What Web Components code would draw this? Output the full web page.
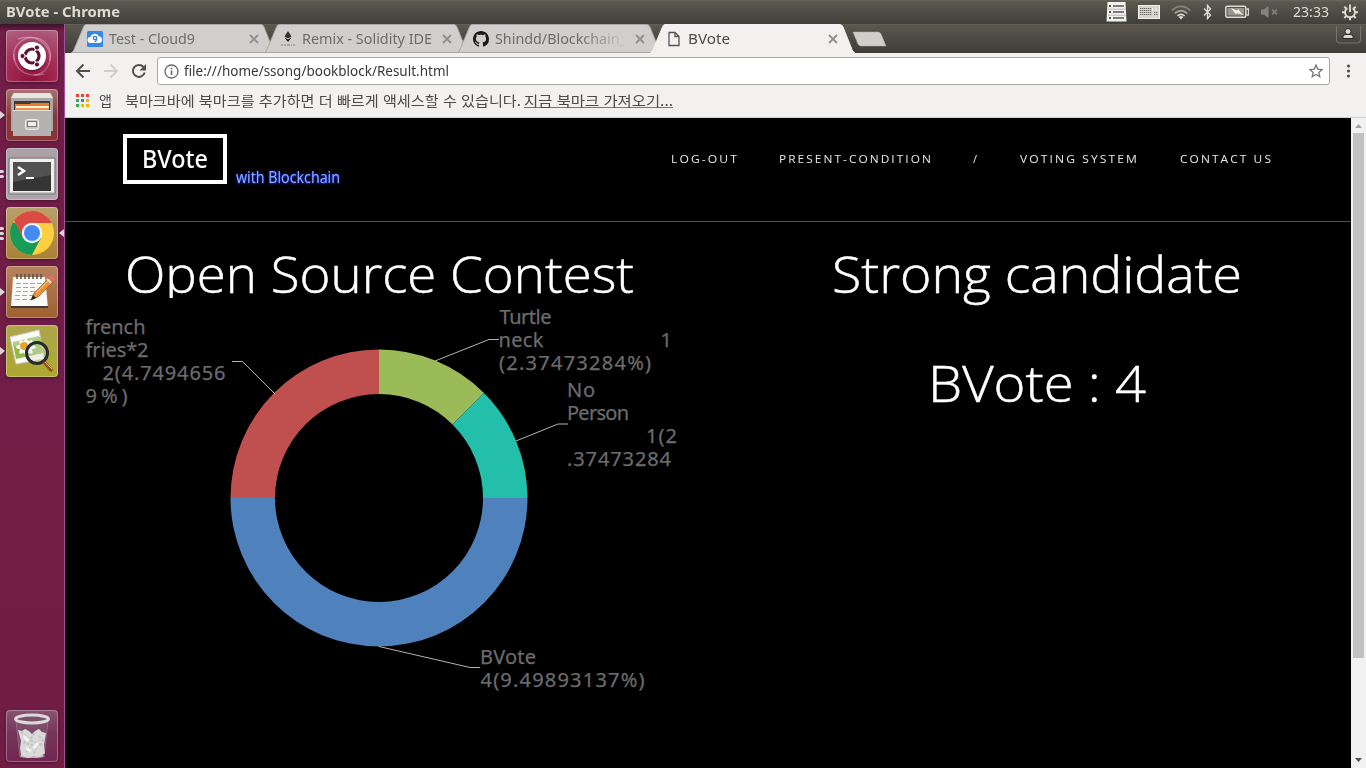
<!DOCTYPE html>
<html lang="ko">
<head>
<meta charset="utf-8">
<title>BVote</title>
<style>
html,body{margin:0;width:1366px;height:768px;overflow:hidden;background:#000;font-family:"Noto Sans","Noto Sans CJK KR",sans-serif}
</style>
</head>
<body>
<desktop-shell></desktop-shell>
<script>
const define = (name, html, setup) => customElements.define(name, class extends HTMLElement {
  connectedCallback() {
    if (this.shadowRoot) return;
    const t = document.createElement('template');
    t.innerHTML = html;
    this.attachShadow({mode: 'open'}).append(t.content.cloneNode(true));
    if (setup) setup.call(this, this.shadowRoot);
  }
});

/* One line of text stretched horizontally to the width in its w attribute. */
define('fit-line', `<style>
:host{display:block;white-space:pre;flex:none}
span{display:inline-block;transform-origin:0 50%}
</style><span><slot></slot></span>`, function (root) {
  const w = +this.getAttribute('w'), s = root.querySelector('span');
  this.style.width = w + 'px';
  const n = s.offsetWidth;
  if (n) s.style.transform = 'scaleX(' + w / s.getBoundingClientRect().width + ')';
});

define('top-panel', `<style>
:host{display:flex;align-items:center;height:24px;box-sizing:border-box;padding:0 8px 0 6px;background:linear-gradient(#68675a 0,#5a584e 2px,#403f3a 100%);color:#dfdbd2;font:13.5px/24px "Noto Sans",sans-serif}
.t{font-weight:700;margin-right:auto}
svg{flex:none;display:block}
</style>
<fit-line class="t" w="114">BVote - Chrome</fit-line>
<svg width="22" height="20" viewBox="0 0 22 20"><path d="M1.5 0h18l1 19.5H.5z" fill="#f1f1ee"/><path d="M2 7.2h18M2 13.2h18" stroke="#b9bbb8"/><path d="M7 4h11M7 10h11M7 16h11" stroke="#555" stroke-width="1.6"/><path d="M3 4h2M3 10h2M3 16h2" stroke="#555" stroke-width="2"/></svg>
<svg style="margin-left:10px" width="22" height="14" viewBox="0 0 22 14"><rect x=".5" y=".5" width="21" height="13" fill="#d6d4cf" stroke="#efeeea"/><path d="M2 3.5h12M2 5.5h12M2 7.5h12M2 9.5h12M16 7.5h4M16 9.5h4" stroke="#68675f" stroke-dasharray="1.3 .7"/><path d="M14.5 3v3M18 3v3" stroke="#eee"/></svg>
<svg style="margin-left:11px" width="20" height="16" viewBox="0 0 20 16"><g fill="none" stroke-width="1.7"><path d="M.7 6.5Q10-1.8 19.3 6.5" stroke="#85837a"/><path d="M3.8 9.4Q10 3.8 16.2 9.4" stroke="#aaa79d"/><path d="M6.4 12Q10 8.6 13.6 12" stroke="#dfdbd2"/></g><path d="M7.6 13Q10 11 12.4 13L10 15.5z" fill="#dfdbd2"/></svg>
<svg style="margin-left:12px" width="9" height="16" viewBox="0 0 9 16"><path d="M1 4.5l6.5 6.500L4.500 14.500V1.500L7.500 5L1 11.500" fill="none" stroke="#dfdbd2" stroke-width="1.4"/></svg>
<svg style="margin-left:13px" width="24" height="14" viewBox="0 0 24 14"><rect x=".8" y="1.300" width="20" height="11" rx="1.500" fill="none" stroke="#dfdbd2" stroke-width="1.500"/><rect x="2.500" y="3" width="16.600" height="7.600" fill="#97958c"/><path d="M21.500 4h2v6h-2" fill="none" stroke="#dfdbd2" stroke-width="1.300"/><path d="M6 3l6 2.500 1-1.500 5 6-6-2-1 1.500z" fill="#f1ede5"/></svg>
<svg style="margin-left:12px" width="18" height="14" viewBox="0 0 18 14"><path d="M0 4.500h3L7.500 1v12L3 9.500H0z" fill="#85837a"/><path d="M11 4.500l5 5m0-5l-5 5" stroke="#85837a" stroke-width="1.700"/></svg>
<fit-line style="margin-left:14px" w="36">23:33</fit-line>
<svg style="margin-left:13px" width="16" height="18" viewBox="0 0 16 18"><g fill="none" stroke="#dfdbd2"><path d="M5.300 5.100A5 5 0 1 0 10.700 5.100" stroke-width="1.900"/><path d="M8 1.500v7.500" stroke-width="1.900"/><path d="M0 9.300h3M13 9.300h3M8 14v3.300M2.300 3.600l2.100 2.100M13.700 3.600l-2.100 2.100M2.300 15l2.100-2.100M13.700 15l-2.100-2.100" stroke-width="2"/></g></svg>`);

/* Launcher tile; the "windows" attribute gives the number of running-window markers. */
define('launch-tile', `<style>
:host{display:grid;grid-template-columns:6px 52px 1fr;height:52px;align-items:center}
.box{width:52px;height:52px;box-sizing:border-box;border-radius:4px;background:var(--c);box-shadow:inset 0 0 0 1px #ffffff4a,0 1px 3px #0005;overflow:hidden}
::slotted(svg){display:block;width:52px;height:52px}
i{display:grid;gap:2px}i b{width:4px;height:3px;background:#d9d4d8;border-radius:0 2px 2px 0}
.tri{width:0;height:0;border:4px solid transparent;border-left:5px solid #d9d4d8;border-right:0}
.r{width:0;height:0;justify-self:end;border:4px solid transparent;border-right:5px solid #d9d4d8;border-left:0}
</style><i></i><div class="box"><slot></slot></div>`, function (root) {
  const n = +this.getAttribute('windows') || 0, m = root.querySelector('i');
  if (n === 1) m.innerHTML = '<span class="tri"></span>';
  else m.innerHTML = '<b></b>'.repeat(n);
  if (this.hasAttribute('active')) root.append(Object.assign(document.createElement('span'), {className: 'r'}));
});

define('unity-launcher', `<style>
:host{display:flex;flex-direction:column;gap:7px;box-sizing:border-box;width:65px;height:744px;padding:6px 0;border-right:1px solid #a3519a;background:linear-gradient(#3c1128 0,#701d48 7px,#701d46 100%)}
.last{margin-top:auto}
</style>
<launch-tile style="--c:radial-gradient(circle at 50% 100%,#8c1238,#a52c57 50%,#ae6683)"><svg viewBox="0 0 52 52"><g fill="none" stroke="#ffffff48" stroke-width="1.500"><path d="M8 30C5 14 20 4 34 9c8 4 12 12 10 22"/><path d="M12 9c18-6 33 6 32 20-1 10-8 15-16 16"/><path d="M8 24c0 16 12 24 30 20"/></g><circle cx="26" cy="27.500" r="14" fill="#0004"/><circle cx="26" cy="26" r="14" fill="#fff"/><circle cx="26" cy="26" r="7" fill="none" stroke="#5f1237" stroke-width="3.200"/><path d="M26 26h-9M26 26l4.500-8M26 26l4.500 8" stroke="#fff" stroke-width="1.500"/><g fill="#5f1237" stroke="#fff"><circle cx="16.500" cy="26" r="2.600"/><circle cx="31" cy="17.500" r="2.600"/><circle cx="31" cy="34.500" r="2.600"/></g></svg></launch-tile>
<launch-tile windows="1" style="--c:linear-gradient(#aa7473,#8b3639 50%,#883337)"><svg viewBox="0 0 52 52"><path d="M7 4h38l2 5v33H5V9z" fill="#aaa9a7"/><path d="M8 4h36l3 5H5z" fill="#e6e6e3"/><path d="M8 12h36v10H8z" fill="#403b38"/><path d="M9 15h15l1-1h18v8H9z" fill="#e87b2b"/><path d="M10 17h33v2H10z" fill="#fff0d8"/><path d="M9 19h34v3H9z" fill="#e99544"/><path d="M7 21h38v26H7z" fill="#b4b3b1"/><path d="M7 21.500h38" stroke="#ddd"/><rect x="19.500" y="30.500" width="13" height="10" rx="2" fill="#c8c8c8" stroke="#eee"/><rect x="21.500" y="32.500" width="9" height="5" fill="#eee" stroke="#777"/></svg></launch-tile>
<launch-tile windows="2" style="--c:linear-gradient(#aaa0a8,#aea5ab)"><svg viewBox="0 0 52 52"><path d="M3 10h46v36H3z" fill="#c7c7c5" stroke="#777"/><path d="M4 11h44v33H4z" fill="#f0f0ee"/><path d="M7 14h38v29H7z" fill="#343534"/><path d="M7 14h38v13L7 34z" fill="#505150"/><path d="M12 19l6 4-6 4" fill="none" stroke="#fff" stroke-width="2.500"/><path d="M20 30h8" stroke="#fff" stroke-width="2"/></svg></launch-tile>
<launch-tile windows="3" active style="--c:linear-gradient(#b8a06c,#aa8135)"><svg viewBox="0 0 52 52"><circle cx="26" cy="26" r="22" fill="#ffcf40"/><path d="M26 26L7 15A22 22 0 0 0 26 48L35 31z" fill="#169b58"/><path d="M26 16h19.700A22 22 0 0 0 8 13.500L17 31z" fill="#dc4b43"/><circle cx="26" cy="26" r="10.200" fill="#f4f7fa"/><circle cx="26" cy="26" r="8" fill="#448af2"/></svg></launch-tile>
<launch-tile windows="1" style="--c:linear-gradient(#b8825f,#9e602f)"><svg viewBox="0 0 52 52"><path d="M7 11h32l3 31H5z" fill="#fafaf8"/><path d="M5 40h37v2H5z" fill="#403a35"/><g stroke="#a5a5a1" stroke-width="1" stroke-dasharray="5 2"><path d="M10 17.500h26M10 21.500h20M10 25.500h26M9 29.500h18M9 33.500h17"/></g><path d="M11 8v5m4-5v5m4-5v5m4-5v5m4-5v5m4-5v5m4-5v5" stroke="#555" stroke-width="1.500"/><path d="M25 34l3-7L43 12l4 4-15 15z" fill="#ee9136" stroke="#8a501f" stroke-width=".7"/><path d="M30 27L44 13" stroke="#ffca7d"/><path d="M25 34l2-5 3 3z" fill="#222"/><path d="M42 12l3-3q4 0 4 4l-3 3z" fill="#e36c6a"/><path d="M41 13l4 4" stroke="#ddd" stroke-width="2"/></svg></launch-tile>
<launch-tile windows="1" style="--c:linear-gradient(#ada64d,#aca830)"><svg viewBox="0 0 52 52"><path d="M4 12L33 5l5 29-28 5z" fill="#fbfbf7" stroke="#ccc"/><path d="M7 18l27-6 3 16-27 6z" fill="#92bd45"/><path d="M7 17l26-6 1 4-27 7z" fill="#b0ce8c"/><g fill="#fff"><ellipse cx="20" cy="22" rx="10" ry="3"/><ellipse cx="20" cy="22" rx="3" ry="8"/><ellipse cx="20" cy="22" rx="3" ry="9" transform="rotate(45 20 22)"/><ellipse cx="20" cy="22" rx="3" ry="9" transform="rotate(-45 20 22)"/></g><circle cx="18" cy="21" r="4" fill="#e8a42b"/><circle cx="31" cy="28" r="10.500" fill="#ddd6" stroke="#292b29" stroke-width="3"/><path d="M39 38l6 7" stroke="#99521d" stroke-width="3.500" stroke-linecap="round"/><path d="M39 37l7 7" stroke="#e7b063"/></svg></launch-tile>
<launch-tile class="last" style="--c:linear-gradient(#8a5270,#75355a 45%,#722652)"><svg viewBox="0 0 52 52"><path d="M10 11l4 36h24l4-36z" fill="#8c648066" stroke="#b9a0b066"/><ellipse cx="26" cy="46" rx="12" ry="2" fill="#c0b7bc"/><path d="M12 20l4 1 3-2 4 2 3 3 3-3 4-2 3 3 4 1-1 6-1 6 1 8-5 4-7-1-5 2-7-3-1-7 1-7z" fill="#d9dad7"/><path d="M15 22l7 5-4 6 8 2-6 7m9-19l-5 7 9 4-5 9m5-17l4 5-3 5" fill="none" stroke="#bfc1be" stroke-width="1.500" stroke-dasharray="3 1.500"/><path d="M18 26l4 5m6 7l4-5M20 38l5 3" stroke="#f2f2f0" stroke-width="3"/><ellipse cx="26" cy="9" rx="16.500" ry="4" fill="#7b5069" stroke="#dadbd8" stroke-width="3"/></svg></launch-tile>`);

define('browser-tab', `<style>
:host{display:grid;width:205px;height:29px;margin-right:-12px;flex:none}
.bg,.row{grid-area:1/1}
.bg{display:block}
.row{display:flex;align-items:center;padding:0 17px 0 16px;color:#6e6c69;font:14px/29px "Noto Sans",sans-serif;z-index:1}
:host([active]){z-index:3}
:host([active]) .row{color:#4c4c4a}
::slotted(svg){width:16px;height:16px;display:block;flex:none}
.name{display:block;margin-left:6px;flex:1;overflow:hidden}
:host([faded]) .name{-webkit-mask:linear-gradient(90deg,#000 85px,transparent 132px)}
</style><svg class="bg" width="205" height="29"><path d="M.5 28.500Q2 28 3 25.500L12.500 3Q13.500 .5 15 .5H190Q192 .5 193 3L202 25.500Q203 28.500 205 28.500z" fill="#d0cfcd" stroke="#aaa8a4"/></svg>
<div class="row"><slot name="icon"></slot><div class="name"><slot></slot></div><svg width="10" height="10" viewBox="0 0 10 10"><path d="M1 1l8 8M9 1L1 9" stroke="#918f8b" stroke-width="1.800"/></svg></div>`, function (root) {
  if (this.hasAttribute('active')) {
    const p = root.querySelector('.bg path');
    p.setAttribute('fill', '#f2f1f0');
    p.setAttribute('stroke', '#f2f1f0');
  }
});

define('tab-strip', `<style>
:host{display:flex;height:29px;padding-left:6px;background:linear-gradient(#68675a 0,#5a584e 1px,#3d3c37 100%)}
.new{margin:7px 0 0 9px}
.user{margin:1px 5px 0 auto}
svg{display:block;flex:none}
</style>
<browser-tab><svg slot="icon" viewBox="0 0 16 16"><rect width="16" height="16" rx="1.500" fill="#3489e7"/><path d="M3.500 12A3 3 0 0 1 3.500 6 4.500 4.500 0 0 1 12 5.500 3.300 3.300 0 0 1 12.500 12z" fill="#fff"/><circle cx="8" cy="7" r="1.700" fill="none" stroke="#2a78cf" stroke-width="1.200"/><path d="M9.700 7q0 3-2 4" fill="none" stroke="#2a78cf" stroke-width="1.200"/></svg><fit-line w="86">Test - Cloud9</fit-line></browser-tab>
<browser-tab><svg slot="icon" viewBox="0 0 16 16"><path d="M8 0l3.500 5.500L8 7.500 4.500 5.500z" fill="#333"/><path d="M4.500 6.500L8 8.500l3.500-2L8 11z" fill="#111"/><path d="M1 14h2m1 0h2m1 0h3m1 0h1m1 0h2" stroke="#999" stroke-width="1.500"/></svg><fit-line w="130">Remix - Solidity IDE</fit-line></browser-tab>
<browser-tab faded><svg slot="icon" viewBox="0 0 16 16"><path fill="#1b1817" d="M8 0C3.580 0 0 3.580 0 8c0 3.540 2.290 6.530 5.470 7.590.4.070.55-.17.55-.38 0-.19-.01-.82-.01-1.490-2.010.37-2.530-.49-2.690-.94-.09-.23-.48-.94-.82-1.130-.28-.15-.68-.52-.01-.53.63-.01 1.080.58 1.230.82.720 1.210 1.870.87 2.330.66.070-.52.28-.87.510-1.070-1.780-.2-3.640-.89-3.640-3.950 0-.87.310-1.590.820-2.150-.08-.2-.36-1.020.080-2.120 0 0 .67-.21 2.200.820.640-.18 1.320-.27 2-.27s1.360.090 2 .27c1.530-1.040 2.200-.82 2.200-.82.440 1.100.160 1.920.080 2.120.510.560.820 1.270.820 2.150 0 3.070-1.870 3.750-3.650 3.950.290.250.540.730.540 1.480 0 1.070-.01 1.930-.01 2.200 0 .210.150.460.550.380A8.010 8.010 0 0 0 16 8c0-4.420-3.580-8-8-8z"/></svg><fit-line w="131">Shindd/Blockchain_</fit-line></browser-tab>
<browser-tab active><svg slot="icon" viewBox="0 0 16 16"><path d="M3 1.500h6l4 4v9H3zM9 1.500v4h4" fill="none" stroke="#555" stroke-width="1.300"/></svg><fit-line w="42">BVote</fit-line></browser-tab>
<svg class="new" width="35" height="17"><path d="M1 1h25q2 0 3 2l5 12H9q-2 0-3-2z" fill="#cfcecb" stroke="#b2b0aa" stroke-width=".5"/></svg>
<svg class="user" width="26" height="20"><path d="M1.500 1v14q0 3 3 3h18q3 0 3-3V1" fill="none" stroke="#77756d"/><circle cx="13" cy="6.500" r="3" fill="#ddd9d0" stroke="#292825"/><path d="M8 13.500v-2q0-2 3-2h4q3 0 3 2v2z" fill="#ddd9d0" stroke="#292825"/></svg>`);

define('tool-bar', `<style>
:host{display:block;height:65px;box-sizing:border-box;border-bottom:1px solid #cfcecc;background:#f2f1f0}
.nav{display:flex;align-items:center;height:28px;padding:4px 15px 0 9px}
svg{display:block;flex:none}
.url{display:flex;align-items:center;box-sizing:border-box;flex:1;height:28px;margin-left:8px;border:1px solid #aaa9a7;border-radius:3px;background:#fff;padding:0 6px;color:#383838;font:14px/26px "Noto Sans",sans-serif}
.url fit-line{margin-left:5px;margin-right:auto}
.marks{display:flex;align-items:center;height:31px;padding-left:11px;color:#4c4c4c;font:14px/31px "Noto Sans CJK KR",sans-serif}
.link{height:14px;line-height:14px;border-bottom:1px solid #777}
</style>
<div class="nav">
<svg width="18" height="18" viewBox="0 0 18 18"><path d="M9.500 2.500L3 9l6.500 6.500M3 9h13" fill="none" stroke="#505050" stroke-width="2"/></svg>
<svg style="margin-left:10px" width="18" height="18" viewBox="0 0 18 18"><path d="M8.500 2.500L15 9l-6.500 6.500M15 9H2" fill="none" stroke="#d0cfce" stroke-width="2"/></svg>
<svg style="margin-left:9px" width="20" height="18" viewBox="0 0 20 18"><path d="M14.500 5A6 6 0 1 0 15.700 10.500" fill="none" stroke="#505050" stroke-width="2"/><path d="M17 2v6.500h-6.500z" fill="#505050"/></svg>
<div class="url"><svg width="15" height="15" viewBox="0 0 15 15"><circle cx="7.500" cy="7.500" r="6.500" fill="none" stroke="#666" stroke-width="1.300"/><path d="M7.500 6.500V11M7.500 3.700v1.600" stroke="#666" stroke-width="1.600"/></svg><fit-line w="265">file:///home/ssong/bookblock/Result.html</fit-line>
<svg width="14" height="14" viewBox="0 0 14 14"><path d="M7 1l1.700 4.100 4.500.4-3.400 2.900 1 4.300L7 10.400l-3.800 2.300 1-4.300L.8 5.500l4.500-.4z" fill="none" stroke="#777" stroke-width="1.300"/></svg></div>
<svg style="margin-left:16px" width="5" height="14" viewBox="0 0 5 14"><g fill="#505050"><circle cx="2.500" cy="2" r="1.600"/><circle cx="2.500" cy="7" r="1.600"/><circle cx="2.500" cy="12" r="1.600"/></g></svg>
</div>
<div class="marks">
<svg width="13" height="13" viewBox="0 0 13 13"><path fill="#ea4335" d="M0 0h3v3H0zM5 0h3v3H5zM10 0h3v3h-3z"/><path fill="#3aa757" d="M0 5h3v3H0zM0 10h3v3H0z"/><path fill="#2f7ded" d="M5 5h3v3H5z"/><path fill="#fbb004" d="M10 5h3v3h-3zM5 10h3v3H5zM10 10h3v3h-3z"/></svg>
<fit-line style="margin-left:10px" w="13">앱</fit-line>
<fit-line style="margin-left:13px" w="396">북마크바에 북마크를 추가하면 더 빠르게 액세스할 수 있습니다.</fit-line>
<fit-line class="link" style="margin-left:3px" w="149">지금 북마크 가져오기...</fit-line>
</div>`);

define('donut-chart', `<style>
:host{display:block;width:629px;height:470px;background:#000}
svg{display:block}
text{font:20px "Noto Sans","Open Sans",sans-serif;fill:#6c6c6c;stroke:#6c6c6c;stroke-width:.25px;white-space:pre}
</style><svg width="629" height="470" viewBox="65 298 629 470"><g class="arcs"></g><g fill="none" stroke="#b5b5b5" stroke-width="1"><path d="M232 361.500h10.500L275 394M499 339.500h-10L435 361M568 424h-10L516 441M379 646.500l91 21h10"/></g><g class="labels"></g></svg>`, function (root) {
  const cx = 379, cy = 498, R = 148.5, r = 104;
  const pt = (rad, deg) => { const a = deg * Math.PI / 180; return (cx + rad * Math.sin(a)).toFixed(2) + ' ' + (cy - rad * Math.cos(a)).toFixed(2); };
  root.querySelector('.arcs').innerHTML = [[0, 45, '#9bbb58'], [45, 90, '#23bfaa'], [90, 270, '#4f81bc'], [270, 360, '#c0504e']].map(([a, b, c]) =>
    `<path fill="${c}" d="M${pt(R, a)}A${R} ${R} 0 0 1 ${pt(R, b)}L${pt(r, b)}A${r} ${r} 0 0 0 ${pt(r, a)}z"/>`).join('');
  root.querySelector('.labels').innerHTML = [
    ['french', 85.5, 334, 60], ['fries*2', 85.5, 357, 63], ['2(4.7494656', 102.5, 380, 123], ['9%)', 85.5, 403, 42],
    ['Turtle', 499.5, 324, 52], ['neck', 498.5, 347, 45], ['1', 660.5, 347, 11], ['(2.37473284%)', 499, 370, 152],
    ['No', 567, 397, 28], ['Person', 567, 420, 62], ['1(2', 646, 443, 31], ['.37473284', 567, 466, 104],
    ['BVote', 480, 664, 56], ['4(9.49893137%)', 480.5, 687, 164]
  ].map(([s, x, y, w]) => `<text x="${x}" y="${y}" textLength="${w}" lengthAdjust="spacing">${s}</text>`).join('');
});

define('vote-header', `<style>
:host{display:flex;align-items:flex-start;box-sizing:border-box;height:104px;padding:16px 78px 0 58px;border-bottom:1px solid #4d4d4d;color:#fff}
.logo{box-sizing:border-box;width:104px;height:50px;border:4px solid #fff;padding-left:15px;font:500 25px/40px "Noto Sans",sans-serif}
.sub{margin:31px auto 0 9px;font:400 16px/24px "Open Sans",sans-serif;color:#8fa8ff;text-shadow:0 0 2px #2546ff,0 1px 2px #1734e8}
nav{display:flex;gap:41px;padding-top:16px;font:400 11.500px/18px "Open Sans",sans-serif;letter-spacing:2px;color:#e8e8e8}
</style>
<div class="logo"><fit-line w="66">BVote</fit-line></div><fit-line class="sub" w="104">with Blockchain</fit-line>
<nav><fit-line w="68">LOG-OUT</fit-line><fit-line style="margin-left:-1px" w="154">PRESENT-CONDITION</fit-line><fit-line style="margin-left:-1px" w="6">/</fit-line><fit-line w="119">VOTING SYSTEM</fit-line><fit-line w="93">CONTACT US</fit-line></nav>`);

define('vote-page', `<style>
:host{display:block;width:1286px;height:650px;background:#000;color:#fff;overflow:hidden}
main{display:grid;grid-template-columns:629px 1fr}
h1,h2{margin:0;font:300 50px/104px "Open Sans",sans-serif;-webkit-text-stroke:.5px #fff}
h1{height:76px;overflow:hidden}
h1 fit-line{margin-left:60px}
.right{padding-left:138px}
.right h2+h2{margin-top:5px;padding-left:96px}
</style><vote-header></vote-header>
<main><section><h1><fit-line w="509">Open Source Contest</fit-line></h1><donut-chart></donut-chart></section>
<section class="right"><h2><fit-line w="410">Strong candidate</fit-line></h2><h2><fit-line w="218">BVote : 4</fit-line></h2></section></main>`);

define('scroll-bar', `<style>
:host{display:flex;flex-direction:column;align-items:center;width:15px;height:650px;background:#f1f1f1}
svg{display:block;flex:none}
.thumb{width:11px;height:525px;background:#c1c1c1}
.down{margin-top:auto}
</style><svg width="15" height="15"><path d="M4 10l3.500-4 3.500 4z" fill="#a3a3a3"/></svg><div class="thumb"></div><svg class="down" width="15" height="15"><path d="M4 5h7L7.500 9z" fill="#505050"/></svg>`);

define('desktop-shell', `<style>
:host{display:grid;grid-template:24px 744px/65px 1301px;width:1366px;height:768px}
top-panel{grid-column:1/3}
.view{display:flex}
</style><top-panel></top-panel><unity-launcher></unity-launcher><div><tab-strip></tab-strip><tool-bar></tool-bar><div class="view"><vote-page></vote-page><scroll-bar></scroll-bar></div></div>`);
</script>
</body>
</html>
